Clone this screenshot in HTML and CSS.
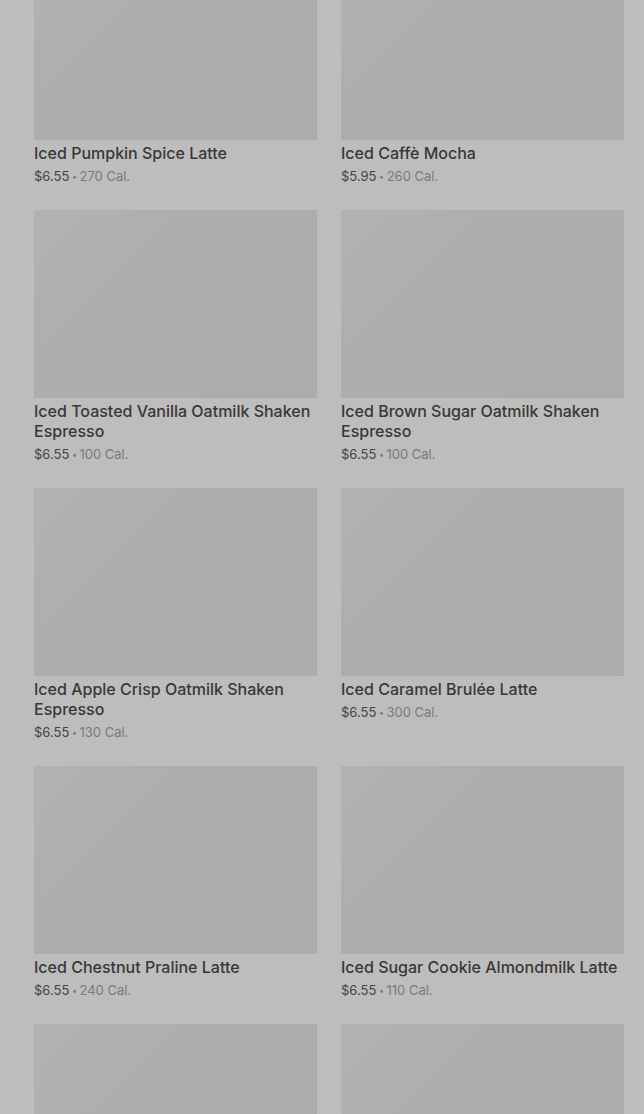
FILE: index.html
```html
<!DOCTYPE html>
<html lang="en">
<head>
    <meta charset="UTF-8">
    <meta name="viewport" content="width=device-width, initial-scale=1.0">
    <title>Menu</title>
    <link rel="stylesheet" href="styles.css">
</head>
<body>
    <div class="grid">
        <div class="card">
            <div class="thumb"></div>
            <h3 class="name">Iced Pumpkin Spice Latte</h3>
            <p class="meta"><span class="price">$6.55</span><span class="dot"> • </span>270 Cal.</p>
        </div>
        <div class="card">
            <div class="thumb"></div>
            <h3 class="name">Iced Caffè Mocha</h3>
            <p class="meta"><span class="price">$5.95</span><span class="dot"> • </span>260 Cal.</p>
        </div>
        <div class="card">
            <div class="thumb"></div>
            <h3 class="name">Iced Toasted Vanilla Oatmilk Shaken Espresso</h3>
            <p class="meta"><span class="price">$6.55</span><span class="dot"> • </span>100 Cal.</p>
        </div>
        <div class="card">
            <div class="thumb"></div>
            <h3 class="name">Iced Brown Sugar Oatmilk Shaken Espresso</h3>
            <p class="meta"><span class="price">$6.55</span><span class="dot"> • </span>100 Cal.</p>
        </div>
        <div class="card">
            <div class="thumb"></div>
            <h3 class="name">Iced Apple Crisp Oatmilk Shaken Espresso</h3>
            <p class="meta"><span class="price">$6.55</span><span class="dot"> • </span>130 Cal.</p>
        </div>
        <div class="card">
            <div class="thumb"></div>
            <h3 class="name">Iced Caramel Brulée Latte</h3>
            <p class="meta"><span class="price">$6.55</span><span class="dot"> • </span>300 Cal.</p>
        </div>
        <div class="card">
            <div class="thumb"></div>
            <h3 class="name">Iced Chestnut Praline Latte</h3>
            <p class="meta"><span class="price">$6.55</span><span class="dot"> • </span>240 Cal.</p>
        </div>
        <div class="card">
            <div class="thumb"></div>
            <h3 class="name">Iced Sugar Cookie Almondmilk Latte</h3>
            <p class="meta"><span class="price">$6.55</span><span class="dot"> • </span>110 Cal.</p>
        </div>
        <div class="card">
            <div class="thumb"></div>
        </div>
        <div class="card">
            <div class="thumb"></div>
        </div>
    </div>
</body>
</html>
```

FILE: styles.css
```css
html, body {
    margin: 0;
    padding: 0;
    height: 100%;
    overflow: hidden;
}
body {
    background: #bdbdbd;
    font-family: Inter, "Noto Sans", sans-serif;
}
.grid {
    display: grid;
    grid-template-columns: 283px 283px;
    column-gap: 24px;
    row-gap: 24px;
    padding: 0 20px 0 34px;
    margin-top: -48px;
}
.thumb {
    height: 188px;
    background: linear-gradient(135deg, #b2b2b2 0%, #adadad 40%, #acacac 100%);
}
.name {
    margin: 3px 0 0;
    font-size: 16px;
    font-weight: 500;
    line-height: 20px;
    color: #383838;
}
.meta {
    margin: 3px 0 0;
    font-size: 13px;
    line-height: 20px;
    color: #7a7a7a;
}
.price {
    color: #444;
}
.dot {
    font-size: 9px;
    line-height: 0;
    vertical-align: 1px;
}
```
